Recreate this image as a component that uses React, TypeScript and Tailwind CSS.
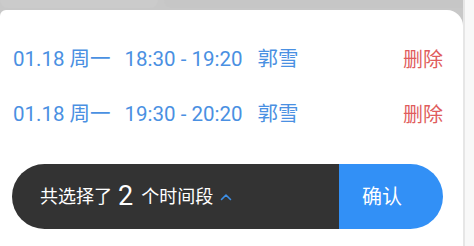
import React from "react";

const font = { fontFamily: "Roboto, 'Noto Sans CJK SC', sans-serif" };

function Row({ date, time, name }: { date: string; time: string; name: string }) {
  return (
    <div className="flex h-[55px] items-center pl-[13px] pr-[20px] text-[20.5px] text-[#4a90e2]">
      <span>{date}</span>
      <span className="ml-[14px]">{time}</span>
      <span className="ml-[15px]">{name}</span>
      <span className="ml-auto text-[20px] text-[#e05d5d]">删除</span>
    </div>
  );
}

export default function App() {
  return (
    <div className="flex h-[246px] w-[474px] overflow-hidden bg-[#c8c8c8]" style={font}>
      <div className="flex w-[463px] flex-col">
        <div className="flex h-[10px] gap-[6px]">
          <div className="h-[8px] w-[158px] rounded-b-[10px] bg-[#cbcbcb]" />
          <div className="h-[8px] flex-1 rounded-bl-[10px] bg-[#c6c6c6]" />
        </div>
        <div className="flex-1 rounded-tl-[6px] rounded-tr-[16px] bg-white pt-[22px]">
          <Row date="01.18 周一" time="18:30 - 19:20" name="郭雪" />
          <Row date="01.18 周一" time="19:30 - 20:20" name="郭雪" />
          <div className="ml-[12px] mt-[22px] flex h-[65px] w-[431px] overflow-hidden rounded-full">
            <div className="flex flex-1 items-center bg-[#333333] pl-[28px] text-white">
              <span className="text-[18px]">共选择了</span>
              <span className="ml-[6px] text-[27px] leading-none">2</span>
              <span className="ml-[8px] text-[18px]">个时间段</span>
              <svg className="ml-[7px]" width="12" height="8" viewBox="0 0 12 8" fill="none">
                <path d="M1.5 6.5 L6 2 L10.5 6.5" stroke="#3d8fe6" strokeWidth="1.6" strokeLinecap="round" strokeLinejoin="round" />
              </svg>
            </div>
            <div className="flex w-[104px] items-center bg-[#3290f6] pl-[23px] text-[20px] text-white">
              确认
            </div>
          </div>
        </div>
      </div>
      <div className="w-[11px] border-l-2 border-[#e6e6e6] bg-[#f8f8f8]" />
    </div>
  );
}
